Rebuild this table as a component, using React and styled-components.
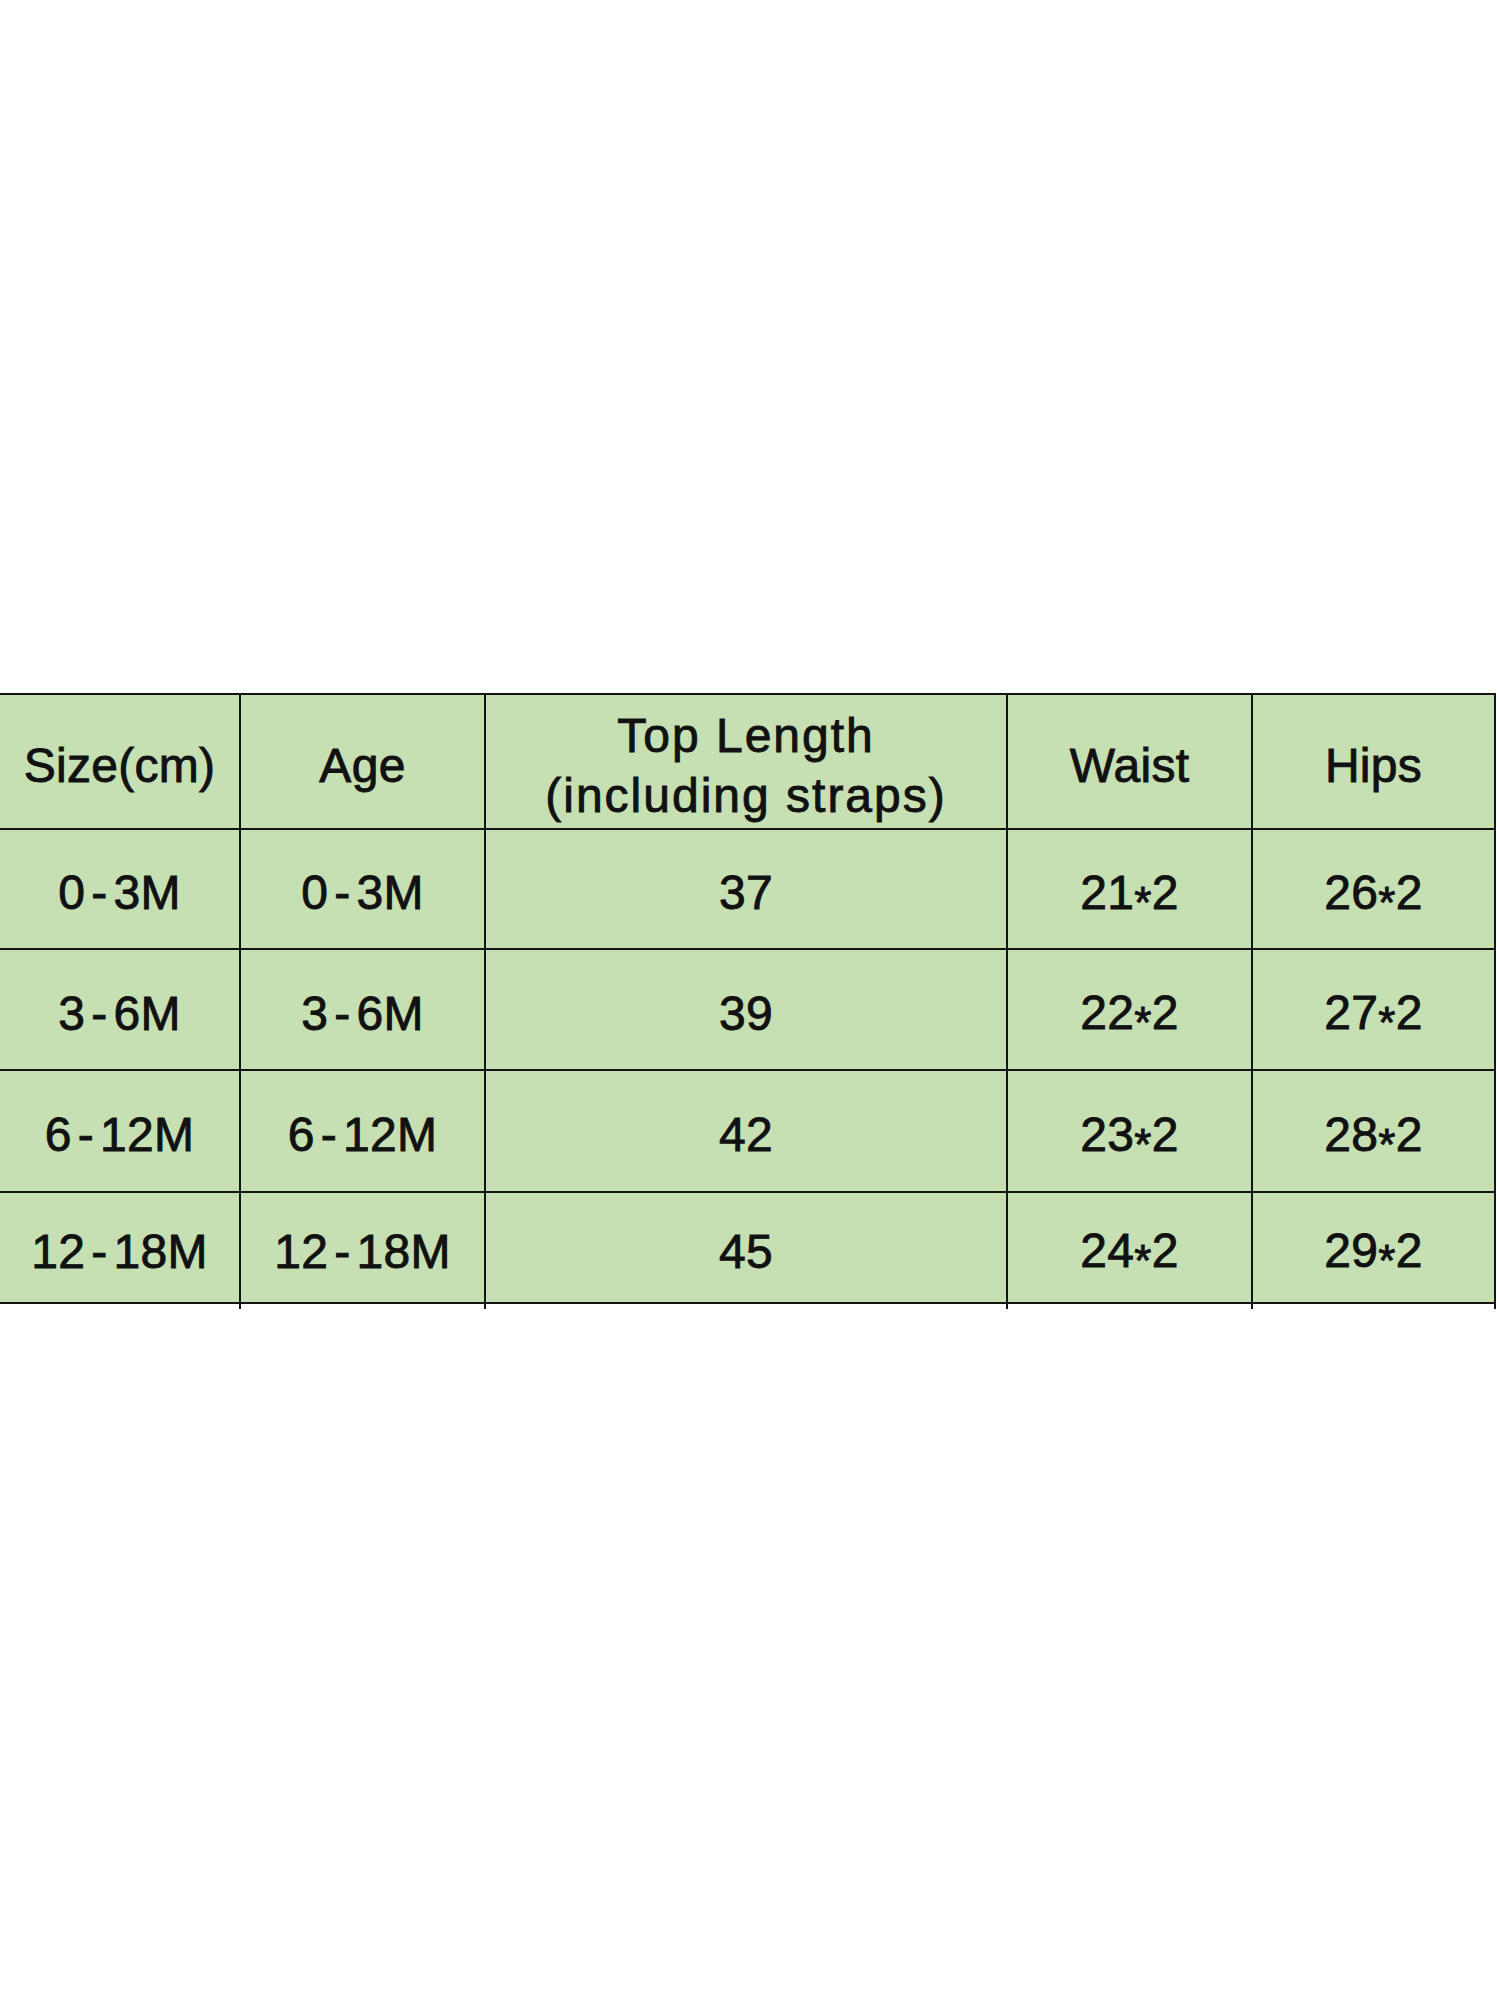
import React from 'react'
import styled, { createGlobalStyle } from 'styled-components'

const GlobalStyle = createGlobalStyle`
    html, body {
        margin: 0;
        padding: 0;
        background: #ffffff;
    }
`

const Page = styled.div`
    width: 1500px;
    height: 2000px;
    display: flex;
    flex-direction: column;
    justify-content: center;
    font-family: "Liberation Sans", Arial, sans-serif;
    color: #111;
`

const columns = '241px 245px 522px 245px 243px'

const Table = styled.div`
    display: grid;
    grid-template-columns: ${ columns };
    border-top: 2px solid #141414;
    background: #c6e0b4;
    width: max-content;
    margin-top: 1px;
`

const Cell = styled.div`
    box-sizing: border-box;
    height: ${ props => props.h }px;
    padding-top: 9px;
    border-right: 2px solid #141414;
    border-bottom: 2px solid #141414;
    display: flex;
    align-items: center;
    justify-content: center;
    text-align: center;
    font-size: 48px;
    line-height: 60px;
    letter-spacing: ${ props => props.wide ? '2px' : '0.3px' };
    -webkit-text-stroke: 0.9px #111;
`

const Dash = styled.span`
    margin: 0 6px;
`

const Star = styled.span`
    font-size: 44px;
    position: relative;
    top: 9px;
`

const Stub = styled.div`
    display: grid;
    grid-template-columns: ${ columns };
    width: max-content;
    height: 5px;
`

const StubCell = styled.div`
    border-right: 2px solid #141414;
`

const rows = [
    { h: 120, size: ['0', '3M'], age: ['0', '3M'], length: '37', waist: '21', hips: '26' },
    { h: 121, size: ['3', '6M'], age: ['3', '6M'], length: '39', waist: '22', hips: '27' },
    { h: 122, size: ['6', '12M'], age: ['6', '12M'], length: '42', waist: '23', hips: '28' },
    { h: 111, size: ['12', '18M'], age: ['12', '18M'], length: '45', waist: '24', hips: '29' },
]

const Range = ({ parts }) => (
    <span>{ parts[0] }<Dash>-</Dash>{ parts[1] }</span>
)

const Times = ({ value }) => (
    <span>{ value }<Star>*</Star>2</span>
)

const App = () => (
    <Page>
        <GlobalStyle />
        <Table>
            <Cell h={ 135 }>Size(cm)</Cell>
            <Cell h={ 135 }>Age</Cell>
            <Cell h={ 135 } wide>Top Length<br />(including straps)</Cell>
            <Cell h={ 135 }>Waist</Cell>
            <Cell h={ 135 }>Hips</Cell>
            {
                rows.map(row => (
                    <React.Fragment key={ row.length }>
                        <Cell h={ row.h }><Range parts={ row.size } /></Cell>
                        <Cell h={ row.h }><Range parts={ row.age } /></Cell>
                        <Cell h={ row.h }>{ row.length }</Cell>
                        <Cell h={ row.h }><Times value={ row.waist } /></Cell>
                        <Cell h={ row.h }><Times value={ row.hips } /></Cell>
                    </React.Fragment>
                ))
            }
        </Table>
        <Stub>
            <StubCell />
            <StubCell />
            <StubCell />
            <StubCell />
            <StubCell />
        </Stub>
    </Page>
)

export default App
